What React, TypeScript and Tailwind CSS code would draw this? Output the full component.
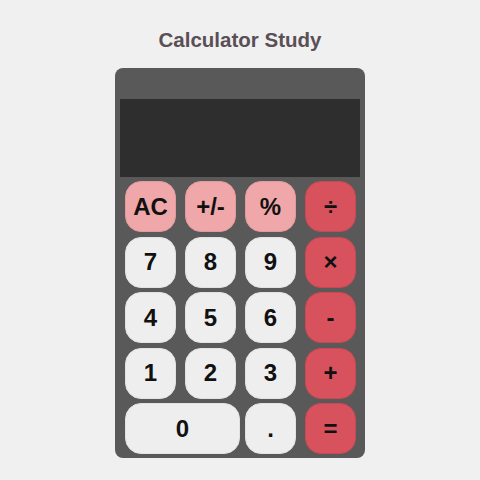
const keys: { label: string; kind: "fn" | "num" | "op"; wide?: boolean }[] = [
  { label: "AC", kind: "fn" },
  { label: "+/-", kind: "fn" },
  { label: "%", kind: "fn" },
  { label: "÷", kind: "op" },
  { label: "7", kind: "num" },
  { label: "8", kind: "num" },
  { label: "9", kind: "num" },
  { label: "×", kind: "op" },
  { label: "4", kind: "num" },
  { label: "5", kind: "num" },
  { label: "6", kind: "num" },
  { label: "-", kind: "op" },
  { label: "1", kind: "num" },
  { label: "2", kind: "num" },
  { label: "3", kind: "num" },
  { label: "+", kind: "op" },
  { label: "0", kind: "num", wide: true },
  { label: ".", kind: "num" },
  { label: "=", kind: "op" },
];

const colors = {
  fn: "bg-[#f0a7a9] border-[#e39a9c]",
  num: "bg-[#eeeeee] border-[#e2e2e2]",
  op: "bg-[#d8525e] border-[#c94853]",
};

function Key({ label, kind, wide }: { label: string; kind: "fn" | "num" | "op"; wide?: boolean }) {
  return (
    <button
      className={
        "h-[51px] rounded-[16px] border text-[24px] font-bold leading-none text-[#111] flex items-center justify-center " +
        colors[kind] +
        (wide ? " col-span-2 w-[115px]" : " w-[51px]")
      }
    >
      {label}
    </button>
  );
}

export default function App() {
  return (
    <div className="min-h-[480px] bg-[#f0f0f0] flex flex-col items-center pt-[28px] font-['Liberation_Sans',Arial,sans-serif]">
      {/* Title */}
      <h1 className="text-[20.5px] leading-[24px] font-bold text-[#594f55]">Calculator Study</h1>

      {/* Calculator body */}
      <div className="mt-[16px] w-[250px] rounded-[8px] bg-[#595959] px-[5px] pt-[31px] pb-[4px]">
        <div className="h-[78px] bg-[#2e2e2e]" />
        <div className="mt-[4px] pl-[5px] grid grid-cols-[repeat(4,51px)] gap-x-[9px] gap-y-[4.6px]">
          {keys.map((k) => (
            <Key key={k.label} {...k} />
          ))}
        </div>
      </div>
    </div>
  );
}
